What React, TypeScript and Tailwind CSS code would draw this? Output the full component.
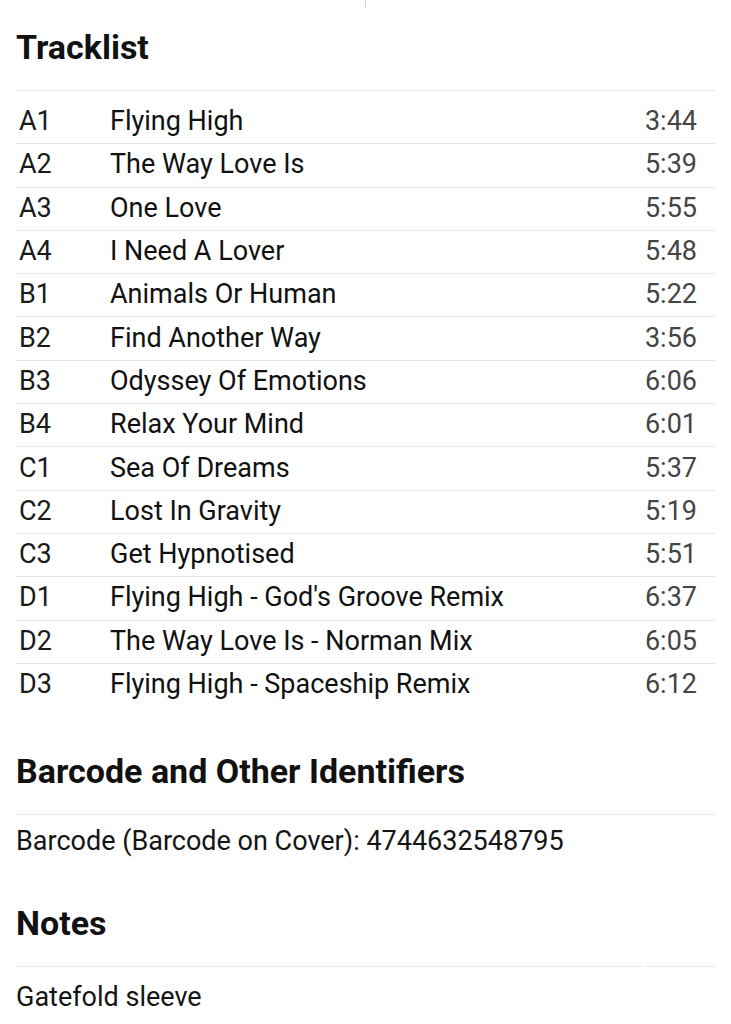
import React from "react";

const tracks: [string, string, string][] = [
  ["A1", "Flying High", "3:44"],
  ["A2", "The Way Love Is", "5:39"],
  ["A3", "One Love", "5:55"],
  ["A4", "I Need A Lover", "5:48"],
  ["B1", "Animals Or Human", "5:22"],
  ["B2", "Find Another Way", "3:56"],
  ["B3", "Odyssey Of Emotions", "6:06"],
  ["B4", "Relax Your Mind", "6:01"],
  ["C1", "Sea Of Dreams", "5:37"],
  ["C2", "Lost In Gravity", "5:19"],
  ["C3", "Get Hypnotised", "5:51"],
  ["D1", "Flying High - God's Groove Remix", "6:37"],
  ["D2", "The Way Love Is - Norman Mix", "6:05"],
  ["D3", "Flying High - Spaceship Remix", "6:12"],
];

export default function App() {
  return (
    <div className="w-[731px] h-[1024px] overflow-hidden bg-white font-['Roboto',_'Liberation_Sans',_sans-serif] text-[#111]">
      <div className="flex h-[8px] justify-center">
        <div className="h-[8px] w-px bg-[#d6d6d6]" />
      </div>
      <div className="px-4">
        <h2 className="mt-[19px] h-[40px] text-[34px] font-bold leading-[40px]">Tracklist</h2>
        <div className="mt-[23px] border-t border-[#e6e6e6] pt-[9px]">
          {tracks.map(([pos, title, dur], i) => (
            <div
              key={pos}
              className={`flex h-[43.3px] items-center pb-[2px] pl-[3px] pr-[18px] text-[27px] leading-[30px] ${
                i === 0 ? "" : "border-t border-[#e6e6e6]"
              }`}
            >
              <div className="w-[91px] shrink-0 text-[#1a1a1a]">{pos}</div>
              <div className="flex-1 text-[#111]">{title}</div>
              <div className="text-[#454545]">{dur}</div>
            </div>
          ))}
        </div>

        <h2 className="mt-[45px] h-[40px] text-[34px] font-bold leading-[40px]">Barcode and Other Identifiers</h2>
        <div className="mt-[23px] border-t border-[#e6e6e6] pt-[11px]">
          <div className="h-[30px] text-[27px] leading-[30px] text-[#151515]">
            Barcode (Barcode on Cover): 4744632548795
          </div>
        </div>

        <h2 className="mt-[47px] h-[40px] text-[34px] font-bold leading-[40px]">Notes</h2>
        <div className="mt-[23px] flex gap-[4px]">
          <div className="h-px flex-1 bg-[#e6e6e6]" />
          <div className="h-px w-[70px] bg-[#e6e6e6]" />
        </div>
        <div className="pt-[15px]">
          <div className="h-[30px] text-[27px] leading-[30px] text-[#151515]">Gatefold sleeve</div>
        </div>
      </div>
    </div>
  );
}
